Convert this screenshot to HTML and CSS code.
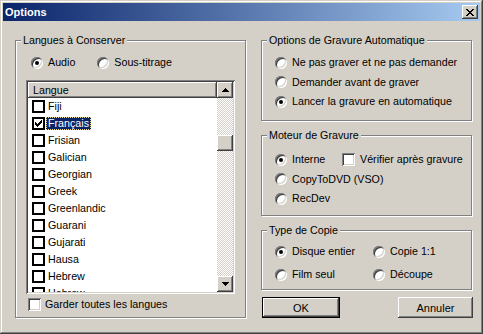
FILE: index.html
```html
<!DOCTYPE html>
<html lang="fr">
<head>
    <meta charset="UTF-8">
    <title>Options</title>
    <link rel="stylesheet" href="styles.css">
</head>
<body>
<div class="window">
    <div class="titlebar">
        <span class="title">Options</span>
        <button class="close">
            <svg width="8" height="7" viewBox="0 0 8 7" shape-rendering="crispEdges">
                <path fill="#000" d="M0 0h2v1H0z M6 0h2v1H6z M1 1h2v1H1z M5 1h2v1H5z M2 2h4v1H2z M3 3h2v1H3z M2 4h4v1H2z M1 5h2v1H1z M5 5h2v1H5z M0 6h2v1H0z M6 6h2v1H6z"/>
            </svg>
        </button>
    </div>

    <div class="dialog-body">
        <!-- Langues -->
        <div class="group group-langs">
            <span class="legend">Langues à Conserver</span>
            <div class="radio-line">
                <label class="opt"><span class="radio on"></span>Audio</label>
                <label class="opt"><span class="radio"></span>Sous-titrage</label>
            </div>
            <div class="listbox">
                <div class="list-main">
                    <div class="list-header">Langue</div>
                    <div class="list-rows">
                        <div class="row"><span class="lcheck"></span><span class="ltext">Fiji</span></div>
                        <div class="row"><span class="lcheck checked"><svg width="7" height="7" viewBox="0 0 7 7" shape-rendering="crispEdges"><path fill="#000" d="M6 0h1v3H6z M5 1h1v3H5z M4 2h1v3H4z M3 3h1v3H3z M2 4h1v3H2z M1 3h1v3H1z M0 2h1v3H0z"/></svg></span><span class="ltext selected">Français</span></div>
                        <div class="row"><span class="lcheck"></span><span class="ltext">Frisian</span></div>
                        <div class="row"><span class="lcheck"></span><span class="ltext">Galician</span></div>
                        <div class="row"><span class="lcheck"></span><span class="ltext">Georgian</span></div>
                        <div class="row"><span class="lcheck"></span><span class="ltext">Greek</span></div>
                        <div class="row"><span class="lcheck"></span><span class="ltext">Greenlandic</span></div>
                        <div class="row"><span class="lcheck"></span><span class="ltext">Guarani</span></div>
                        <div class="row"><span class="lcheck"></span><span class="ltext">Gujarati</span></div>
                        <div class="row"><span class="lcheck"></span><span class="ltext">Hausa</span></div>
                        <div class="row"><span class="lcheck"></span><span class="ltext">Hebrew</span></div>
                        <div class="row"><span class="lcheck"></span><span class="ltext">Hebrew</span></div>
                    </div>
                </div>
                <div class="scrollbar">
                    <div class="sb-btn">
                        <svg width="7" height="4" viewBox="0 0 7 4" shape-rendering="crispEdges"><path fill="#000" d="M3 0h1v1H3z M2 1h3v1H2z M1 2h5v1H1z M0 3h7v1H0z"/></svg>
                    </div>
                    <div class="sb-track"><div class="sb-thumb"></div></div>
                    <div class="sb-btn">
                        <svg width="7" height="4" viewBox="0 0 7 4" shape-rendering="crispEdges"><path fill="#000" d="M0 0h7v1H0z M1 1h5v1H1z M2 2h3v1H2z M3 3h1v1H3z"/></svg>
                    </div>
                </div>
            </div>
            <label class="opt keep"><span class="check"></span>Garder toutes les langues</label>
        </div>

        <div class="right-col">
            <div class="group group-auto">
                <span class="legend">Options de Gravure Automatique</span>
                <div class="opt-list">
                    <label class="opt"><span class="radio"></span>Ne pas graver et ne pas demander</label>
                    <label class="opt"><span class="radio"></span>Demander avant de graver</label>
                    <label class="opt"><span class="radio on"></span>Lancer la gravure en automatique</label>
                </div>
            </div>

            <div class="group group-engine">
                <span class="legend">Moteur de Gravure</span>
                <div class="opt-list">
                    <div class="opt-line">
                        <label class="opt interne"><span class="radio on"></span>Interne</label>
                        <label class="opt"><span class="check"></span>Vérifier après gravure</label>
                    </div>
                    <label class="opt"><span class="radio"></span>CopyToDVD (VSO)</label>
                    <label class="opt"><span class="radio"></span>RecDev</label>
                </div>
            </div>

            <div class="group group-copy">
                <span class="legend">Type de Copie</span>
                <div class="copy-grid">
                    <label class="opt"><span class="radio on"></span>Disque entier</label>
                    <label class="opt"><span class="radio"></span>Copie 1:1</label>
                    <label class="opt"><span class="radio"></span>Film seul</label>
                    <label class="opt"><span class="radio"></span>Découpe</label>
                </div>
            </div>

            <div class="buttons">
                <button class="btn default">OK</button>
                <button class="btn cancel">Annuler</button>
            </div>
        </div>
    </div>
</div>
</body>
</html>
```

FILE: styles.css
```css
/* General */
body {
    margin: 0;
    background-color: #fff;
    font-family: "Liberation Sans", Arial, sans-serif;
    font-size: 10.7px;
    color: #000;
}

.window {
    width: 483px;
    height: 334px;
    box-sizing: border-box;
    padding: 3px;
    background-color: #D4D0C8;
    box-shadow: inset -1px -1px #404040, inset 1px 1px #D4D0C8, inset -2px -2px #808080, inset 2px 2px #fff;
}

/* Title bar */
.titlebar {
    height: 18px;
    display: flex;
    align-items: center;
    justify-content: space-between;
    padding-left: 2px;
    background: linear-gradient(to right, #0A246A, #A6CAF0);
}

.title {
    color: #fff;
    font-weight: bold;
    font-size: 11px;
}

.close {
    width: 16px;
    height: 14px;
    margin-right: 2px;
    padding: 0;
    border: none;
    display: flex;
    align-items: center;
    justify-content: center;
    background-color: #D4D0C8;
    box-shadow: inset -1px -1px #404040, inset 1px 1px #fff, inset -2px -2px #808080;
}

.close svg {
    display: block;
}

/* Layout */
.dialog-body {
    display: flex;
    padding: 19px 0 0 12px;
}

.right-col {
    width: 212px;
    margin-left: 15px;
}

/* Group boxes */
.group {
    position: relative;
    box-sizing: border-box;
    border: 1px solid #808080;
    box-shadow: inset 1px 1px #fff, 1px 1px #fff;
}

.legend {
    position: absolute;
    top: -7px;
    left: 5px;
    padding: 0 2px;
    line-height: 13px;
    background-color: #D4D0C8;
}

.group-langs {
    width: 231px;
    height: 278px;
    padding: 15px 0 0 0;
}

.group-auto,
.group-engine,
.group-copy {
    width: 211px;
    padding-left: 13px;
}

.group-auto {
    height: 81px;
    padding-top: 12px;
    margin-bottom: 14px;
}

.group-engine {
    height: 81px;
    padding-top: 14px;
    margin-bottom: 14px;
}

.group-copy {
    height: 60px;
    padding-top: 9px;
}

/* Options */
.opt {
    display: flex;
    align-items: center;
    gap: 5px;
    line-height: 13px;
    white-space: nowrap;
}

.opt-list .opt,
.opt-line {
    height: 19.5px;
}

.opt-line {
    display: flex;
    align-items: center;
}

.opt.interne {
    width: 67px;
}

.opt-line .opt {
    height: auto;
}

.copy-grid {
    display: grid;
    grid-template-columns: 98px auto;
    grid-auto-rows: 23px;
}

.radio-line {
    display: flex;
    padding-left: 15px;
    gap: 22px;
}

/* Radio button */
.radio {
    position: relative;
    flex: none;
    width: 12px;
    height: 12px;
    border-radius: 50%;
    background-color: #fff;
    box-shadow: inset 1px 1px #808080, inset -1px -1px #fff, inset 2px 2px #404040, inset -2px -2px #D4D0C8;
}

.radio.on::after {
    content: "";
    position: absolute;
    left: 4px;
    top: 4px;
    width: 4px;
    height: 4px;
    border-radius: 50%;
    background-color: #000;
}

/* Check box */
.check {
    flex: none;
    width: 13px;
    height: 13px;
    background-color: #fff;
    box-shadow: inset 1px 1px #808080, inset -1px -1px #fff, inset 2px 2px #404040, inset -2px -2px #D4D0C8;
}

.keep {
    margin: 4px 0 0 12px;
    gap: 4px;
}

/* List box */
.listbox {
    display: flex;
    width: 209px;
    height: 214px;
    box-sizing: border-box;
    margin: 11px 0 0 10px;
    padding: 2px;
    box-shadow: inset 1px 1px #808080, inset -1px -1px #fff, inset 2px 2px #404040, inset -2px -2px #D4D0C8;
}

.list-main {
    flex: 1;
    display: flex;
    flex-direction: column;
    background-color: #fff;
    overflow: hidden;
}

.list-header {
    height: 16px;
    flex: none;
    box-sizing: border-box;
    padding-left: 5px;
    line-height: 16px;
    background-color: #D4D0C8;
    box-shadow: inset -1px -1px #404040, inset 1px 1px #fff, inset -2px -2px #808080;
}

.list-rows {
    flex: 1;
    overflow: hidden;
}

.row {
    display: flex;
    align-items: center;
    height: 17px;
    padding-left: 4px;
}

.lcheck {
    flex: none;
    display: flex;
    align-items: center;
    justify-content: center;
    width: 13px;
    height: 13px;
    box-sizing: border-box;
    border: 2px solid #000;
    background-color: #fff;
}

.lcheck svg {
    display: block;
}

.ltext {
    margin-left: 1px;
    padding: 0 2px;
    line-height: 13px;
}

.ltext.selected {
    background-color: #0A246A;
    color: #fff;
    outline: 1px dotted #E8D890;
    outline-offset: -1px;
}

/* Scroll bar */
.scrollbar {
    width: 16px;
    display: flex;
    flex-direction: column;
}

.sb-btn {
    height: 16px;
    flex: none;
    display: flex;
    align-items: center;
    justify-content: center;
    background-color: #D4D0C8;
    box-shadow: inset -1px -1px #404040, inset 1px 1px #fff, inset -2px -2px #808080;
}

.sb-track {
    flex: 1;
    background: repeating-conic-gradient(#fff 0 25%, #D4D0C8 0 50%) 0 0 / 2px 2px;
}

.sb-thumb {
    height: 16px;
    margin-top: 37px;
    background-color: #D4D0C8;
    box-shadow: inset -1px -1px #404040, inset 1px 1px #fff, inset -2px -2px #808080;
}

/* Buttons */
.buttons {
    display: flex;
    justify-content: space-between;
    margin-top: 7px;
    padding-left: 1px;
}

.btn {
    height: 21px;
    padding: 0;
    border: none;
    font-family: inherit;
    font-size: 11px;
    color: #000;
    background-color: #D4D0C8;
    box-shadow: inset -1px -1px #404040, inset 1px 1px #fff, inset -2px -2px #808080;
}

.btn.default {
    width: 78px;
    box-shadow: inset 0 0 0 1px #000, inset -2px -2px #404040, inset 2px 2px #fff, inset -3px -3px #808080;
}

.btn.cancel {
    width: 75px;
}
```
